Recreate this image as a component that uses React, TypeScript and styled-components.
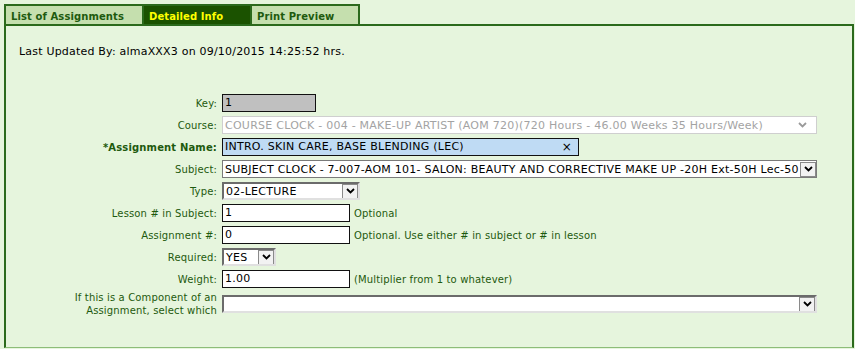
import React from 'react';
import styled, { createGlobalStyle } from 'styled-components';

const GlobalStyle = createGlobalStyle`
  html, body {
    margin: 0;
    background: #e6f5dd;
  }
  body {
    padding: 4px 0 0 4px;
    font-family: 'DejaVu Sans', Verdana, sans-serif;
    font-size: 11px;
    color: #000;
  }
`;

const TabStrip = styled.div`
  display: flex;
  width: 850px;
  border-bottom: 2px solid #2b6a1c;
`;

const Tab = styled.div<{ active?: boolean; w: number }>`
  height: 20px;
  box-sizing: border-box;
  padding: 4px 0 0 5px;
  border: 2px solid #2b6a1c;
  border-bottom: none;
  margin-right: -2px;
  width: ${({ w }) => w}px;
  background: ${({ active }) => (active ? '#1b5200' : '#c5dfae')};
  color: ${({ active }) => (active ? '#ffff00' : '#1e5a0e')};
  font-weight: bold;
  font-size: 10px;
  letter-spacing: 0.1px;
  line-height: 13px;
  white-space: nowrap;
`;

const Panel = styled.div`
  width: 850px;
  height: 322px;
  box-sizing: border-box;
  border-left: 2px solid #2b6a1c;
  border-right: 2px solid #2b6a1c;
  border-bottom: 1px solid #8dbd78;
  padding: 19px 0 0 13px;
`;

const Updated = styled.div`
  font-size: 11px;
  letter-spacing: 0.2px;
  line-height: 14px;
  margin-bottom: 33px;
`;

const Form = styled.div`
  display: flex;
  flex-direction: column;
  margin-left: -13px;
`;

const Row = styled.div<{ tall?: boolean }>`
  display: flex;
  align-items: center;
  height: ${({ tall }) => (tall ? 28 : 22)}px;
`;

const Label = styled.div<{ strong?: boolean }>`
  width: 211px;
  padding-right: 5px;
  text-align: right;
  color: #1e5a0e;
  font-size: 10px;
  letter-spacing: 0.15px;
  font-weight: ${({ strong }) => (strong ? 'bold' : 'normal')};
  line-height: 13px;
`;

const TextBox = styled.div<{ w: number; bg?: string }>`
  width: ${({ w }) => w}px;
  height: 18px;
  box-sizing: border-box;
  border: 1px solid #111;
  background: ${({ bg }) => bg || '#fff'};
  padding: 0 0 0 2px;
  font-size: 11px;
  letter-spacing: 0.25px;
  line-height: 16px;
  display: flex;
  justify-content: space-between;
  white-space: nowrap;
  overflow: hidden;
`;

const Clear = styled.span`
  padding-right: 6px;
  font-size: 12px;
`;

const Hint = styled.span`
  margin-left: 4px;
  color: #1e5a0e;
  font-size: 10px;
  letter-spacing: 0.15px;
`;

const SelectBox = styled.div<{ w: number; disabled?: boolean; inset?: boolean }>`
  width: ${({ w }) => w}px;
  height: 18px;
  box-sizing: border-box;
  display: flex;
  align-items: center;
  background: #fff;
  border: 1px solid ${({ disabled }) => (disabled ? '#cfcfcf' : '#7a7a7a')};
  ${({ inset }) =>
    inset &&
    `border-top: 2px solid #6b6b6b; border-left: 2px solid #6b6b6b;
     border-right: 2px solid #e0e0e0; border-bottom: 2px solid #e0e0e0;`}
  color: ${({ disabled }) => (disabled ? '#a3a3a3' : '#000')};
  font-size: 11px;
  letter-spacing: 0.25px;
  white-space: nowrap;
  overflow: hidden;
`;

const SelectText = styled.span`
  flex: 1;
  padding-left: 2px;
  overflow: hidden;
`;

const Arrow = styled.span<{ flat?: boolean }>`
  width: 16px;
  height: 15px;
  box-sizing: border-box;
  display: flex;
  align-items: center;
  justify-content: center;
  flex-shrink: 0;
  margin-right: ${({ flat }) => (flat ? 6 : 0)}px;
  border: ${({ flat }) => (flat ? 'none' : '1px solid #8a8a8a')};
  background: ${({ flat }) => (flat ? 'transparent' : '#f2f2f2')};
`;

function Chevron({ color = '#000' }: { color?: string }) {
  return (
    <svg width="9" height="6" viewBox="0 0 9 6">
      <path d="M1 1 L4.5 4.5 L8 1" fill="none" stroke={color} strokeWidth="1.8" />
    </svg>
  );
}

function Select({
  w,
  text,
  disabled,
  inset,
}: {
  w: number;
  text: string;
  disabled?: boolean;
  inset?: boolean;
}) {
  return (
    <SelectBox w={w} disabled={disabled} inset={inset}>
      <SelectText>{text}</SelectText>
      <Arrow flat={disabled}>
        <Chevron color={disabled ? '#9a9a9a' : '#000'} />
      </Arrow>
    </SelectBox>
  );
}

export default function App() {
  return (
    <>
      <GlobalStyle />
      <TabStrip>
        <Tab w={140}>List of Assignments</Tab>
        <Tab w={110} active>
          Detailed Info
        </Tab>
        <Tab w={110}>Print Preview</Tab>
      </TabStrip>
      <Panel>
        <Updated>Last Updated By: almaXXX3 on 09/10/2015 14:25:52 hrs.</Updated>
        <Form>
          <Row>
            <Label>Key:</Label>
            <TextBox w={94} bg="#c0c0c0">1</TextBox>
          </Row>
          <Row>
            <Label>Course:</Label>
            <Select
              w={595}
              disabled
              text="COURSE CLOCK - 004 - MAKE-UP ARTIST (AOM 720)(720 Hours - 46.00  Weeks 35 Hours/Week)"
            />
          </Row>
          <Row>
            <Label strong>*Assignment Name:</Label>
            <TextBox w={357} bg="#bfdbf4">
              <span>INTRO. SKIN CARE, BASE BLENDING (LEC)</span>
              <Clear>×</Clear>
            </TextBox>
          </Row>
          <Row>
            <Label>Subject:</Label>
            <Select
              w={595}
              text="SUBJECT CLOCK - 7-007-AOM 101- SALON: BEAUTY AND CORRECTIVE MAKE UP -20H Ext-50H Lec-50"
            />
          </Row>
          <Row>
            <Label>Type:</Label>
            <Select w={138} inset text="02-LECTURE" />
          </Row>
          <Row>
            <Label>Lesson # in Subject:</Label>
            <TextBox w={128}>1</TextBox>
            <Hint>Optional</Hint>
          </Row>
          <Row>
            <Label>Assignment #:</Label>
            <TextBox w={128}>0</TextBox>
            <Hint>Optional. Use either # in subject or # in lesson</Hint>
          </Row>
          <Row>
            <Label>Required:</Label>
            <Select w={54} inset text="YES" />
          </Row>
          <Row>
            <Label>Weight:</Label>
            <TextBox w={128}>1.00</TextBox>
            <Hint>(Multiplier from 1 to whatever)</Hint>
          </Row>
          <Row tall>
            <Label>
              If this is a Component of an
              <br />
              Assignment, select which
            </Label>
            <Select w={595} inset text="" />
          </Row>
        </Form>
      </Panel>
    </>
  );
}
